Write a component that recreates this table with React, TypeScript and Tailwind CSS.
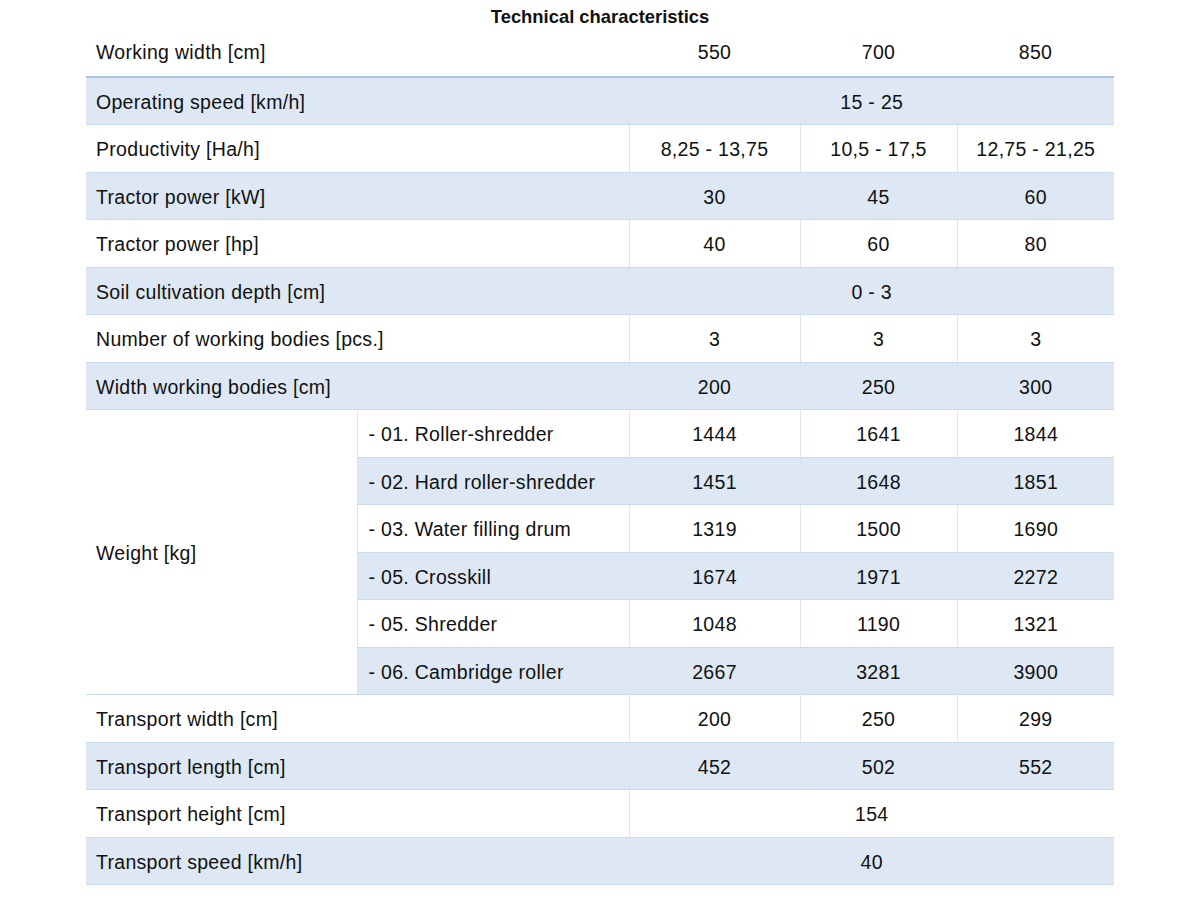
const blue = 'bg-[#dde8f4]';

interface Row {
    label: string;
    values: string[];
}

const topRows: Row[] = [
    { label: 'Operating speed [km/h]', values: ['15 - 25'] },
    { label: 'Productivity [Ha/h]', values: ['8,25 - 13,75', '10,5 - 17,5', '12,75 - 21,25'] },
    { label: 'Tractor power [kW]', values: ['30', '45', '60'] },
    { label: 'Tractor power [hp]', values: ['40', '60', '80'] },
    { label: 'Soil cultivation depth [cm]', values: ['0 - 3'] },
    { label: 'Number of working bodies [pcs.]', values: ['3', '3', '3'] },
    { label: 'Width working bodies [cm]', values: ['200', '250', '300'] },
];

const weightRows: Row[] = [
    { label: '- 01. Roller-shredder', values: ['1444', '1641', '1844'] },
    { label: '- 02. Hard roller-shredder', values: ['1451', '1648', '1851'] },
    { label: '- 03. Water filling drum', values: ['1319', '1500', '1690'] },
    { label: '- 05. Crosskill', values: ['1674', '1971', '2272'] },
    { label: '- 05. Shredder', values: ['1048', '1190', '1321'] },
    { label: '- 06. Cambridge roller', values: ['2667', '3281', '3900'] },
];

const bottomRows: Row[] = [
    { label: 'Transport width [cm]', values: ['200', '250', '299'] },
    { label: 'Transport length [cm]', values: ['452', '502', '552'] },
    { label: 'Transport height [cm]', values: ['154'] },
    { label: 'Transport speed [km/h]', values: ['40'] },
];

const cell = 'h-[47.5px] border-b border-b-[#c9dbed] p-0 pt-[3px] align-middle';
const valueCell = cell + ' border-l border-l-[#dce6f0] text-center';
const headCell = 'h-[49px] border-b-2 border-b-[#aac6e2] p-0 pt-[2px] align-middle';

function Values({ values }: { values: string[] }) {
    if (values.length === 1) {
        return (
            <td colSpan={3} className={valueCell}>
                {values[0]}
            </td>
        );
    }
    return (
        <>
            {values.map((v, i) => (
                <td key={i} className={valueCell}>
                    {v}
                </td>
            ))}
        </>
    );
}

export default function App() {
    return (
        <div className="min-h-[917px] bg-white text-[#111] font-['Liberation_Sans',Arial,sans-serif] text-[19.5px]">
            <div className="w-[1028px] ml-[86px]">
                <div className="h-[28px] flex items-center justify-center pt-[6px] text-[18.4px] font-bold">
                    Technical characteristics
                </div>
                <table className="w-full table-fixed border-collapse tracking-[0.3px]">
                    <colgroup>
                        <col className="w-[271px]" />
                        <col className="w-[272px]" />
                        <col className="w-[171px]" />
                        <col className="w-[157px]" />
                        <col className="w-[157px]" />
                    </colgroup>
                    <tbody>
                        <tr>
                            <td colSpan={2} className={headCell + ' pl-[10px]'}>
                                Working width [cm]
                            </td>
                            <td className={headCell + ' text-center'}>550</td>
                            <td className={headCell + ' text-center'}>700</td>
                            <td className={headCell + ' text-center'}>850</td>
                        </tr>
                        {topRows.map((row, i) => (
                            <tr key={row.label} className={i % 2 === 0 ? blue : 'bg-white'}>
                                <td colSpan={2} className={cell + ' pl-[10px]'}>
                                    {row.label}
                                </td>
                                <Values values={row.values} />
                            </tr>
                        ))}
                        {weightRows.map((row, i) => (
                            <tr key={row.label} className={i % 2 === 1 ? blue : 'bg-white'}>
                                {i === 0 && (
                                    <td rowSpan={6} className={cell + ' bg-white pl-[10px]'}>
                                        Weight [kg]
                                    </td>
                                )}
                                <td className={cell + ' border-l border-l-[#dce6f0] pl-[11px]'}>{row.label}</td>
                                <Values values={row.values} />
                            </tr>
                        ))}
                        {bottomRows.map((row, i) => (
                            <tr key={row.label} className={i % 2 === 1 ? blue : 'bg-white'}>
                                <td colSpan={2} className={cell + ' pl-[10px]'}>
                                    {row.label}
                                </td>
                                <Values values={row.values} />
                            </tr>
                        ))}
                    </tbody>
                </table>
            </div>
        </div>
    );
}
